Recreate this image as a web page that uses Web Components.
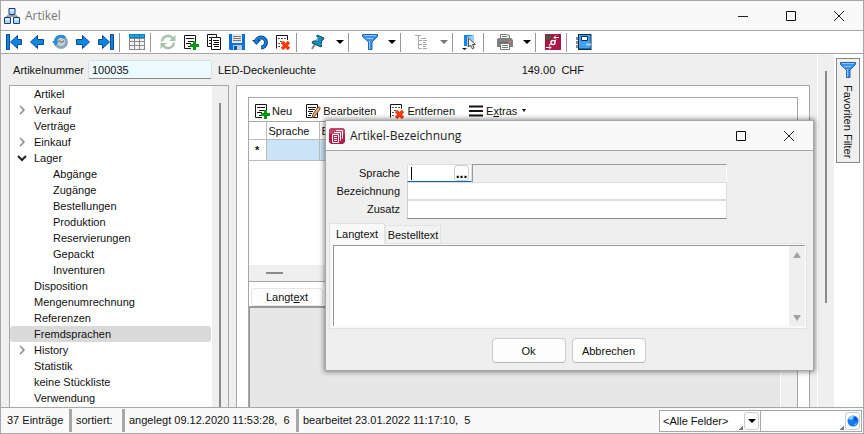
<!DOCTYPE html>
<html lang="de">
<head>
<meta charset="utf-8">
<title>Artikel</title>
<style>
  html, body { margin: 0; height: 100%; }
  body {
    --line: #a7a7a7;
    --face: #efefef;
    --bar: #f9f9f9;
    font: 11px/16px "Liberation Sans", Arial, sans-serif;
    color: #111;
    overflow: hidden;
    position: relative;
  }
</style>
</head>
<body>
<article-window></article-window>
<name-dialog></name-dialog>

<script>
const icons = {
  app: `<g stroke="#1b3f86" fill="#a9d2f7"><path d="M5 .5h6v6H5zM.5 9.5h6v6h-6zM9.5 9.5h6v6h-6z"/></g><path d="M8 7v1M3 9V8h10v1" stroke="#555" fill="none"/><path d="M6 1.5h4v2H6zM1.500 10.500h4v2h-4zM10.500 10.500h4v2h-4z" fill="#e3f2ff"/>`,
  first: `<path d="M.5.5h3v15h-3zM4.500 8L11.500 1.500V5.500h4v5h-4v4z" fill="#0f86de" stroke="#0b4a9e"/>`,
  prev: `<path d="M1.500 8L8.500 1.500V5.500h6v5h-6v4z" fill="#0f86de" stroke="#0b4a9e"/>`,
  next: `<path d="M14.500 8L7.500 1.500V5.500h-6v5h6v4z" fill="#0f86de" stroke="#0b4a9e"/>`,
  last: `<path d="M12.500.5h3v15h-3zM11.500 8L4.500 1.500V5.500h-4v5h4v4z" fill="#0f86de" stroke="#0b4a9e"/>`,
  history: `<circle cx="9" cy="8" r="5.500" fill="#c9cdd0" stroke="#8aa9bd" stroke-width="3"/><path d="M3.500 8A5.500 5.500 0 0 1 13 4" fill="none" stroke="#2a8fd8" stroke-width="3"/><path d="M0 7h7l-3.500 5z" fill="#2a8fd8"/><path d="M7 6l2 2.500 3-1.500" stroke="#666" fill="none"/>`,
  table: `<path d="M0 0h16v16H0z" fill="#8a8a8a"/><path d="M0 0h16v4H0z" fill="#0a7fc0"/><path d="M1 1h4v2H1zM6 1h4v2H6zM11 1h4v2h-4z" fill="#20a7e0"/><path d="M1 5h4v2H1zM6 5h4v2H6zM11 5h4v2h-4zM1 8h4v3H1zM6 8h4v3H6zM11 8h4v3h-4zM1 12h4v3H1zM6 12h4v3H6zM11 12h4v3h-4z" fill="#f3f3f3"/>`,
  refresh: `<path d="M2 7.500A6 6 0 0 1 12.500 4M14 8.500A6 6 0 0 1 3.500 12" fill="none" stroke="#a9c3ae" stroke-width="2.500"/><path d="M15.500 1v6H9zM.5 15V9H7z" fill="#a9c3ae"/>`,
  add: `<path d="M1.500 14.500V1.500h11V8M1.500 14.500H8" fill="none" stroke="#151515"/><path d="M3 4.500h8M5 7.500h6M3 9.500h5M5 12.500h3" stroke="#151515"/><path d="M10 7h3v3h3v3h-3v3h-3v-3H7v-3h3z" fill="#009a0c"/>`,
  copy: `<path d="M1.500.5h9v12h-9z" fill="#fff" stroke="#151515"/><path d="M3 3.500h3M3 6.500h2M3 9.500h2" stroke="#151515"/><path d="M5.500 3.500h9v12h-9z" fill="#fff" stroke="#151515"/><path d="M7 6.500h6M8 8.500h5M7 10.500h6M8 12.500h5" stroke="#151515"/>`,
  save: `<path d="M0 0h16v16H1l-1-1z" fill="#0a6fe0"/><path d="M3 0h10v9H3z" fill="#e2e8ec"/><path d="M4 2.500h8M4 4.500h8M4 6.500h8" stroke="#777"/><path d="M4 11h9v5H4z" fill="#b6c9db"/><path d="M5 12h3v4H5z" fill="#0754b0"/>`,
  undo: `<path d="M4 8A5 5 0 1 1 9 13.500" fill="none" stroke="#0b4597" stroke-width="4"/><path d="M0 6h9l-4.500 5z" fill="#0b4597"/><path d="M4 7A5 5 0 1 1 9 13.500" fill="none" stroke="#0f86de" stroke-width="2"/><path d="M2 7h5l-2.500 3z" fill="#0f86de"/>`,
  remove: `<path d="M1.500 14.500V1.500h11V6" fill="none" stroke="#151515"/><path d="M3 4.500h8M5 7.500h2M3 9.500h2M3 12.500h2" stroke="#555" stroke-dasharray="2 1"/><path d="M7 8l7 7M14 8l-7 7" stroke="#fb3a0a" stroke-width="3.500"/>`,
  edit: `<path d="M1.500 14.500V1.500h11v13z" fill="#fff" stroke="#151515"/><path d="M3 4.500h8M4 6.500h6M3 8.500h5M4 10.500h3M3 12.500h3" stroke="#151515"/><path d="M7 15l1-4 5-7 2 2-5 7z" fill="#dcae72" stroke="#77512f"/><path d="M13 4l1-1 2 2-1 1z" fill="#e05a5a"/>`,
  pin: `<path d="M5 10l-3 5" stroke="#888" stroke-width="2"/><path d="M7 1l7 3-1 2-1 0-1 4 1 2-1 1-9-4 1-2 3 0 2-3-1-1z" fill="#168fb5" stroke="#0c4d6b"/><path d="M8 3l-1 4" stroke="#7fd3ea"/>`,
  funnel: `<path d="M.5.5h15v2L10 8v7.500H6.500V8L.5 2.500z" fill="#3c93e6" stroke="#1f62b5"/><path d="M2 1.500h12" stroke="#8cc6fa"/><path d="M4 4.500h7M7.500 7v8" stroke="#8cc6fa"/>`,
  tree: `<path d="M1 1.500h6M4.500 2v12.500H8M4.500 6.500H8M4.500 10.500H8M7 4.500h5M9 6.500h4M9 10.500h4M9 14.500h4M9 8.500h3M9 12.500h3" fill="none" stroke="#a8a8a8"/>`,
  pointer: `<path d="M2 1h10v11H2z" fill="#1585e8"/><path d="M5 3l7-2v12H5z" fill="#9dd0fa"/><path d="M6.500 4v9l2-2 2 4 1.500-1-1.500-3.500h3z" fill="#fff3dc" stroke="#555"/><path d="M0 14h5l-2.500 2z" fill="#000"/>`,
  printer: `<path d="M3.500.5h6l3 1v4h-9z" fill="#f2f2f2" stroke="#777"/><path d="M5 2.500h5" stroke="#777"/><path d="M0 5l2-1h12l2 2v7H0z" fill="#808080"/><path d="M2 8.500h9" stroke="#666"/><path d="M12 7h2v2h-2z" fill="#e66"/><path d="M3.500 9.500h9v6h-9z" fill="#fff" stroke="#777"/><path d="M5 11.500h6M5 13.500h6" stroke="#777"/>`,
  flow: `<path d="M0 0h16v16H0z" fill="#ab1744"/><path d="M1 1l5 1v3H1z" fill="#147535"/><path d="M9 3.500h5M11 1.500l-2 2 2 2M1 13.500h5M4 11.500l2 2-2 2M11 6l-1 1M6 10l-2 1" stroke="#fff" fill="none"/><circle cx="8" cy="8.500" r="2" fill="#ab1744" stroke="#fff" stroke-width="1.500"/>`,
  book: `<path d="M2 0h13.500v16H2z" fill="#0e2f55"/><path d="M3 1h11.500v13.500H3z" fill="#43a0ee"/><path d="M0 3h2v3H0zM0 7h2v3H0zM0 11h2v3H0z" fill="#888"/><path d="M5.500 2.500h6v4h-6z" fill="#fff" stroke="#0e2f55"/><path d="M10 9.500h5v2h-5z" fill="#a3d5ff"/>`,
  menu: `<path d="M1 3.500h14M1 8h14M1 12.500h14" stroke="#151515" stroke-width="2"/>`,
  docs: `<path d="M2 0h12l2 2v12l-2 2H2l-2-2V2z" fill="#b21f4b"/><path d="M2 0h12l2 2v4H0V2z" fill="#c34469"/><path d="M7 2.500h6.500v8M5 4.500h6.500v8M3.500 6.500h6v8h-6z" stroke="#fff" fill="none"/><path d="M5 8.500h3M5 10.500h3M5 12.500h3" stroke="#fff"/>`,
  minimize: `<path d="M3 8.500h10" stroke="#222"/>`,
  maximize: `<path d="M3.500 3.500h9v9h-9z" fill="none" stroke="#111"/>`,
  close: `<path d="M3 3l10 10M13 3L3 13" stroke="#222"/>`,
  globe: `<circle cx="8" cy="8" r="5.500" fill="#1478f0"/><path d="M3 6q2-4 6-3l-2 4z" fill="#8ed0ff"/><path d="M9 11l3-1-2 3z" fill="#6bb6ff"/><path d="M9 4l4 3-3 1z" fill="#0646b0"/>`
};

class AppIcon extends HTMLElement {
  connectedCallback() {
    this.attachShadow({ mode: 'open' }).innerHTML = `
      <style>
        :host { display: block; flex: none; width: 16px; height: 16px; }
        svg { display: block; }
      </style>
      <svg width="16" height="16" viewBox="0 0 16 16" aria-hidden="true">${icons[this.getAttribute('name')]}</svg>
    `;
  }
}
customElements.define('app-icon', AppIcon);

// icon button; "menu" adds the drop-down arrow
class ToolButton extends HTMLElement {
  connectedCallback() {
    const arrow = this.hasAttribute('menu') ? '<i></i>' : '';
    this.attachShadow({ mode: 'open' }).innerHTML = `
      <style>
        :host { display: block; }
        button {
          display: flex; align-items: center; justify-content: center;
          width: 23px; height: 22px; padding: 0; border: 0; background: none;
        }
        :host([menu]) button { width: 44px; gap: 10px; padding-left: 6px; }
        i { border: 4px solid transparent; border-top-color: #000; border-bottom: 0; }
        :host([off]) i { border-top-color: #777; }
      </style>
      <button aria-label="${this.getAttribute('label')}"><app-icon name="${this.getAttribute('icon')}"></app-icon>${arrow}</button>
    `;
  }
}
customElements.define('tool-button', ToolButton);

class TitleBar extends HTMLElement {
  connectedCallback() {
    const buttons = this.getAttribute('buttons').split(' ');
    this.attachShadow({ mode: 'open' }).innerHTML = `
      <style>
        :host {
          display: flex; align-items: center; flex: none; height: 29px; padding-left: 3px;
          background: var(--bar); border-bottom: 1px solid var(--line);
          font: 12px/16px "Open Sans", "Noto Sans", sans-serif; color: #222;
        }
        span { flex: 1; padding-left: 5px; }
        button { display: flex; justify-content: center; width: 48px; padding: 0; border: 0; background: none; }
      </style>
      <app-icon name="${this.getAttribute('icon')}"></app-icon>
      <span><slot></slot></span>
      ${buttons.map((b) => `<button aria-label="${b}"><app-icon name="${b}"></app-icon></button>`).join('')}
    `;
  }
}
customElements.define('title-bar', TitleBar);

class ToolStrip extends HTMLElement {
  connectedCallback() {
    this.attachShadow({ mode: 'open' }).innerHTML = `
      <style>
        :host {
          display: flex; align-items: center; flex: none; height: 22px; padding-left: 1px;
          background: #fff; border-bottom: 1px solid var(--line);
        }
        ::slotted(hr) { width: 1px; height: 19px; margin: 0 5px 0 2px; border: 0; background: #999; }
      </style>
      <slot></slot>
    `;
  }
}
customElements.define('tool-strip', ToolStrip);

const treeItems = [
  ['Artikel'], ['Verkauf', 'closed'], ['Verträge'], ['Einkauf', 'closed'], ['Lager', 'open'],
  ['Abgänge', 'sub'], ['Zugänge', 'sub'], ['Bestellungen', 'sub'], ['Produktion', 'sub'],
  ['Reservierungen', 'sub'], ['Gepackt', 'sub'], ['Inventuren', 'sub'],
  ['Disposition'], ['Mengenumrechnung'], ['Referenzen'], ['Fremdsprachen', 'active'],
  ['History', 'closed'], ['Statistik'], ['keine Stückliste'], ['Verwendung']
];

class NavTree extends HTMLElement {
  connectedCallback() {
    const row = ([text, kind = '']) => {
      const d = kind == 'open' ? 'M1 3l4 4 4-4' : kind == 'closed' ? 'M3 1l4 4-4 4' : '';
      return `<li class="${kind}"><svg width="10" height="10"><path d="${d}"/></svg><span>${text}</span></li>`;
    };
    this.attachShadow({ mode: 'open' }).innerHTML = `
      <style>
        :host {
          display: flex; flex: none; width: 218px; overflow: hidden;
          background: #fff; border: 1px solid var(--line); border-bottom: 0;
        }
        ul { flex: 1; margin: 0; padding: 0; list-style: none; }
        li { display: flex; align-items: center; gap: 7px; height: 16px; padding-left: 7px; margin-right: 1px; }
        .sub { padding-left: 26px; }
        .active { background: #d9d9d9; border-radius: 3px; }
        path { fill: none; stroke: #888; stroke-width: 1.5; }
        .open path { stroke: #222; stroke-width: 2; }
        .bar { width: 16px; background: var(--face); }
        .bar i { display: block; width: 2px; height: 100%; margin: 17px 0 0 7px; background: #8a8a8a; }
      </style>
      <ul>${treeItems.map(row).join('')}</ul>
      <div class="bar"><i></i></div>
    `;
  }
}
customElements.define('nav-tree', NavTree);

class LanguagePanel extends HTMLElement {
  connectedCallback() {
    this.attachShadow({ mode: 'open' }).innerHTML = `
      <style>
        :host {
          display: flex; flex: 1; min-width: 0; padding: 11px 11px 0;
          background: #fff; border: 1px solid var(--line); border-bottom: 0;
        }
        .inner { display: flex; flex-direction: column; flex: 1; min-width: 0; border: 1px solid var(--line); border-bottom: 0; }
        .tools { display: flex; gap: 13px; height: 23px; padding: 2px 5px 0; box-sizing: border-box; }
        .tools button, .text {
          display: flex; align-items: center; gap: 2px; padding: 0; border: 0;
          background: none; font: inherit; color: inherit; white-space: nowrap;
        }
        .tools i { margin-left: 3px; border: 2px solid transparent; border-top: 3px solid #111; border-bottom: 0; }
        table { width: 100%; border-collapse: collapse; table-layout: fixed; border-top: 1px solid var(--line); }
        th, td { height: 17px; padding: 0 2px; border: 1px solid #bbb; border-width: 0 1px 1px 0; font-weight: normal; text-align: left; }
        td { height: 20px; background: #cce4f7; }
        td:first-child { background: #fff; font-weight: bold; text-align: center; }
        .space { flex: none; height: 104px; }
        .scroll { flex: none; height: 16px; background: var(--face); border-bottom: 1px solid var(--line); }
        .scroll i { display: block; width: 17px; height: 2px; margin: 7px 0 0 17px; background: #8a8a8a; }
        .text {
          flex: none; justify-content: center; width: 72px; height: 18px; margin: 6px 0 0 2px;
          border: 1px solid #e6e6e6; border-radius: 3px; gap: 0; background: #fdfdfd;
        }
        .area { display: flex; flex: 1; background: #e7e7e7; border: solid #999; border-width: 2px 0 0 1px; }
        .area i { width: 16px; margin-left: auto; background: var(--face); border-left: 1px solid #fff; }
      </style>
      <div class="inner">
        <div class="tools">
          <button><app-icon name="add"></app-icon>Neu</button>
          <button><app-icon name="edit"></app-icon>Bearbeiten</button>
          <button><app-icon name="remove"></app-icon>Entfernen</button>
          <button><app-icon name="menu"></app-icon><span>E<u>x</u>tras</span><i></i></button>
        </div>
        <table>
          <colgroup><col style="width: 17px"><col style="width: 53px"><col></colgroup>
          <tr><th></th><th>Sprache</th><th>B</th></tr>
          <tr><td>*</td><td></td><td></td></tr>
        </table>
        <div class="space"></div>
        <div class="scroll"><i></i></div>
        <button class="text">Langt<u>e</u>xt</button>
        <div class="area"><i></i></div>
      </div>
    `;
  }
}
customElements.define('language-panel', LanguagePanel);

class StatusBar extends HTMLElement {
  connectedCallback() {
    this.attachShadow({ mode: 'open' }).innerHTML = `
      <style>
        :host {
          display: flex; align-items: center; flex: none; height: 25px; padding-right: 1px;
          background: var(--bar); border-top: 1px solid var(--line);
        }
        span {
          box-sizing: border-box; flex: none; height: 23px; line-height: 23px; padding: 0 4px;
          border-right: 3px solid var(--line); white-space: pre;
        }
        .count { width: 71px; padding-left: 6px; }
        .sort { width: 53px; }
        .created { width: 174px; }
        .changed { flex: 1; border: 0; }
        .box { display: flex; align-items: center; height: 20px; background: #fff; border: 1px solid var(--line); position: relative; }
        .box + .box { border-left: 0; }
        select, input {
          width: 100px; height: 20px; box-sizing: border-box; padding: 0 3px; border: 0;
          background: none; font: inherit; color: inherit; appearance: none; outline: 0;
        }
        .knob {
          display: flex; align-items: center; justify-content: center; box-sizing: border-box;
          position: absolute; right: 1px; top: 1px; width: 15px; height: 18px; padding: 0;
          border: 1px solid #ccc; border-radius: 3px; background: #fdfdfd; pointer-events: none;
        }
        .knob i { border: 4px solid transparent; border-top-color: #000; border-bottom: 0; }
        .box::after {
          content: ''; position: absolute; right: 17px; bottom: 1px; width: 4px; height: 4px;
          background: linear-gradient(135deg, transparent 50%, #777 50%);
        }
      </style>
      <span class="count">37 Einträge</span>
      <span class="sort">sortiert:</span>
      <span class="created">angelegt 09.12.2020 11:53:28,  6</span>
      <span class="changed">bearbeitet 23.01.2022 11:17:10,  5</span>
      <div class="box"><select aria-label="Suchfeld"><option>&lt;Alle Felder&gt;</option></select><div class="knob"><i></i></div></div>
      <div class="box"><input aria-label="Suchen"><button class="knob" aria-label="Suche starten"><app-icon name="globe"></app-icon></button></div>
    `;
  }
}
customElements.define('status-bar', StatusBar);

class ArticleWindow extends HTMLElement {
  connectedCallback() {
    this.attachShadow({ mode: 'open' }).innerHTML = `
      <style>
        :host {
          display: flex; flex-direction: column; box-sizing: border-box; height: 100vh;
          background: var(--face); border: 1px solid var(--line);
        }
        title-bar { color: #777; }
        main { display: flex; flex: 1; min-height: 0; }
        .page { display: flex; flex-direction: column; flex: 1; min-width: 0; padding: 6px 7px 0 8px; border-right: 1px solid #fff; }
        .head { display: flex; flex: none; align-items: center; height: 19px; }
        .head label { width: 75px; padding-right: 4px; text-align: right; }
        .head input {
          box-sizing: border-box; width: 124px; height: 19px; margin-right: 6px; padding: 0 3px;
          background: #ecfaff; border: 1px solid #ddd; border-bottom-color: #888; border-radius: 2px;
          font: inherit; color: inherit;
        }
        .name { width: 245px; }
        .price { width: 121px; text-align: right; white-space: pre; }
        .split { display: flex; flex: 1; min-height: 0; gap: 7px; margin-top: 6px; }
        .bar { width: 16px; background: var(--face); }
        .bar i { display: block; width: 2px; height: 232px; margin: 17px 0 0 7px; background: #8a8a8a; }
        aside { width: 23px; padding: 4px 4px 0 2px; background: #fff; }
        aside button {
          display: flex; align-items: center; gap: 7px; box-sizing: border-box; width: 24px; height: 105px;
          padding: 3px 0; background: var(--face); border: 1px solid #888;
          font: inherit; color: inherit; writing-mode: vertical-rl; white-space: nowrap;
        }
      </style>
      <title-bar icon="app" buttons="minimize maximize close">Artikel</title-bar>
      <tool-strip>
        <tool-button icon="first" label="Erster"></tool-button>
        <tool-button icon="prev" label="Zurück"></tool-button>
        <tool-button icon="history" label="Verlauf"></tool-button>
        <tool-button icon="next" label="Weiter"></tool-button>
        <tool-button icon="last" label="Letzter"></tool-button>
        <hr>
        <tool-button icon="table" label="Tabelle"></tool-button>
        <hr>
        <tool-button icon="refresh" label="Aktualisieren"></tool-button>
        <tool-button icon="add" label="Neu"></tool-button>
        <tool-button icon="copy" label="Kopieren"></tool-button>
        <tool-button icon="save" label="Speichern"></tool-button>
        <tool-button icon="undo" label="Rückgängig"></tool-button>
        <tool-button icon="remove" label="Löschen"></tool-button>
        <hr>
        <tool-button icon="pin" label="Anheften" menu></tool-button>
        <hr>
        <tool-button icon="funnel" label="Filter" menu></tool-button>
        <hr>
        <tool-button icon="tree" label="Struktur" menu off></tool-button>
        <hr>
        <tool-button icon="pointer" label="Auswahl"></tool-button>
        <hr>
        <tool-button icon="printer" label="Drucken" menu></tool-button>
        <hr>
        <tool-button icon="flow" label="Ablauf"></tool-button>
        <hr>
        <tool-button icon="book" label="Journal"></tool-button>
      </tool-strip>
      <main>
        <div class="page">
          <div class="head">
            <label for="nr">Artikelnummer</label>
            <input id="nr" value="100035">
            <span class="name">LED-Deckenleuchte</span>
            <span class="price">149.00  CHF</span>
          </div>
          <div class="split">
            <nav-tree></nav-tree>
            <language-panel></language-panel>
          </div>
        </div>
        <div class="bar"><i></i></div>
        <aside><button><app-icon name="funnel"></app-icon>Favoriten Filter</button></aside>
      </main>
      <status-bar></status-bar>
    `;
  }
}
customElements.define('article-window', ArticleWindow);

class NameDialog extends HTMLElement {
  connectedCallback() {
    this.attachShadow({ mode: 'open' }).innerHTML = `
      <style>
        :host {
          display: block; position: absolute; left: 325px; top: 120px; box-sizing: border-box; width: 489px;
          background: var(--face); border: 1px solid var(--line); box-shadow: 0 0 5px 1px rgba(0, 0, 0, .45);
        }
        .form {
          display: grid; grid-template-columns: 74px 320px; column-gap: 7px; grid-auto-rows: 18px;
          padding-top: 13px; align-items: center; text-align: right;
        }
        .form > input, .line { box-sizing: border-box; width: 100%; height: 18px; }
        .form > input { padding: 0 3px; border: 1px solid #ddd; border-left-color: #ccc; background: #fff; font: inherit; }
        .form > input:last-child { height: 19px; border-bottom-color: #888; }
        .line { display: flex; }
        .look { display: flex; box-sizing: border-box; width: 65px; padding-right: 2px; background: #fff; border: 1px solid #ddd; border-bottom: 1px solid #0067c0; }
        .look input { flex: 1; min-width: 0; padding: 0; border: 0; outline: 0; background: linear-gradient(#000, #000) 3px 2px / 1px 13px no-repeat; font: inherit; }
        .look button {
          box-sizing: border-box; width: 15px; height: 16px; padding: 0; border: 1px solid #ccc; border-radius: 3px;
          background: #fdfdfd; font: bold 14px/12px "Liberation Sans", sans-serif; color: #000;
        }
        .line output { flex: 1; border: solid #999; border-width: 1px 0 0 1px; border-right: 1px solid #fff; }
        .tabs { display: flex; align-items: flex-end; padding: 5px 0 0 3px; }
        .tabs button {
          width: 56px; height: 18px; padding: 0; border: 1px solid #e2e2e2; border-bottom: 0;
          background: #f3f3f3; font: inherit; color: inherit;
        }
        .tabs .on { height: 21px; padding-bottom: 1px; margin-bottom: -1px; background: var(--bar); position: relative; }
        .sheet { display: flex; margin: 0 6px 0 3px; padding: 1px 1px 2px 3px; background: var(--bar); border: 1px solid #e2e2e2; }
        .sheet textarea {
          flex: 1; height: 81px; box-sizing: border-box; padding: 2px; resize: none; outline: 0; overflow: hidden;
          background: #fff; border: solid #999; border-width: 1px 0 0 1px; font: inherit;
        }
        .bar {
          display: flex; flex-direction: column; justify-content: space-between; align-items: center; width: 16px;
          box-sizing: border-box; padding: 6px 0 5px; background: var(--face); border-top: 1px solid #999;
        }
        .bar i { border: 4px solid transparent; border-top: 0; border-bottom: 6px solid #a3a3a3; }
        .bar i + i { transform: rotate(180deg); }
        footer { display: flex; justify-content: center; gap: 6px; padding: 9px 2px 7px 0; }
        footer button {
          width: 74px; height: 25px; padding: 0; background: #fdfdfd; border: 1px solid #ccc;
          border-bottom-color: #b5b5b5; border-radius: 4px; font: inherit; color: inherit;
        }
      </style>
      <title-bar icon="docs" buttons="maximize close">Artikel-Bezeichnung</title-bar>
      <div class="form">
        <label for="lang">Sprache</label>
        <div class="line"><div class="look"><input id="lang"><button>...</button></div><output></output></div>
        <label for="name">Bezeichnung</label><input id="name">
        <label for="extra">Zusatz</label><input id="extra">
      </div>
      <div class="tabs" role="tablist">
        <button class="on" role="tab">Langtext</button><button role="tab">Bestelltext</button>
      </div>
      <div class="sheet"><textarea aria-label="Langtext"></textarea><div class="bar"><i></i><i></i></div></div>
      <footer><button>Ok</button><button>Abbrechen</button></footer>
    `;
  }
}
customElements.define('name-dialog', NameDialog);
</script>
</body>
</html>
